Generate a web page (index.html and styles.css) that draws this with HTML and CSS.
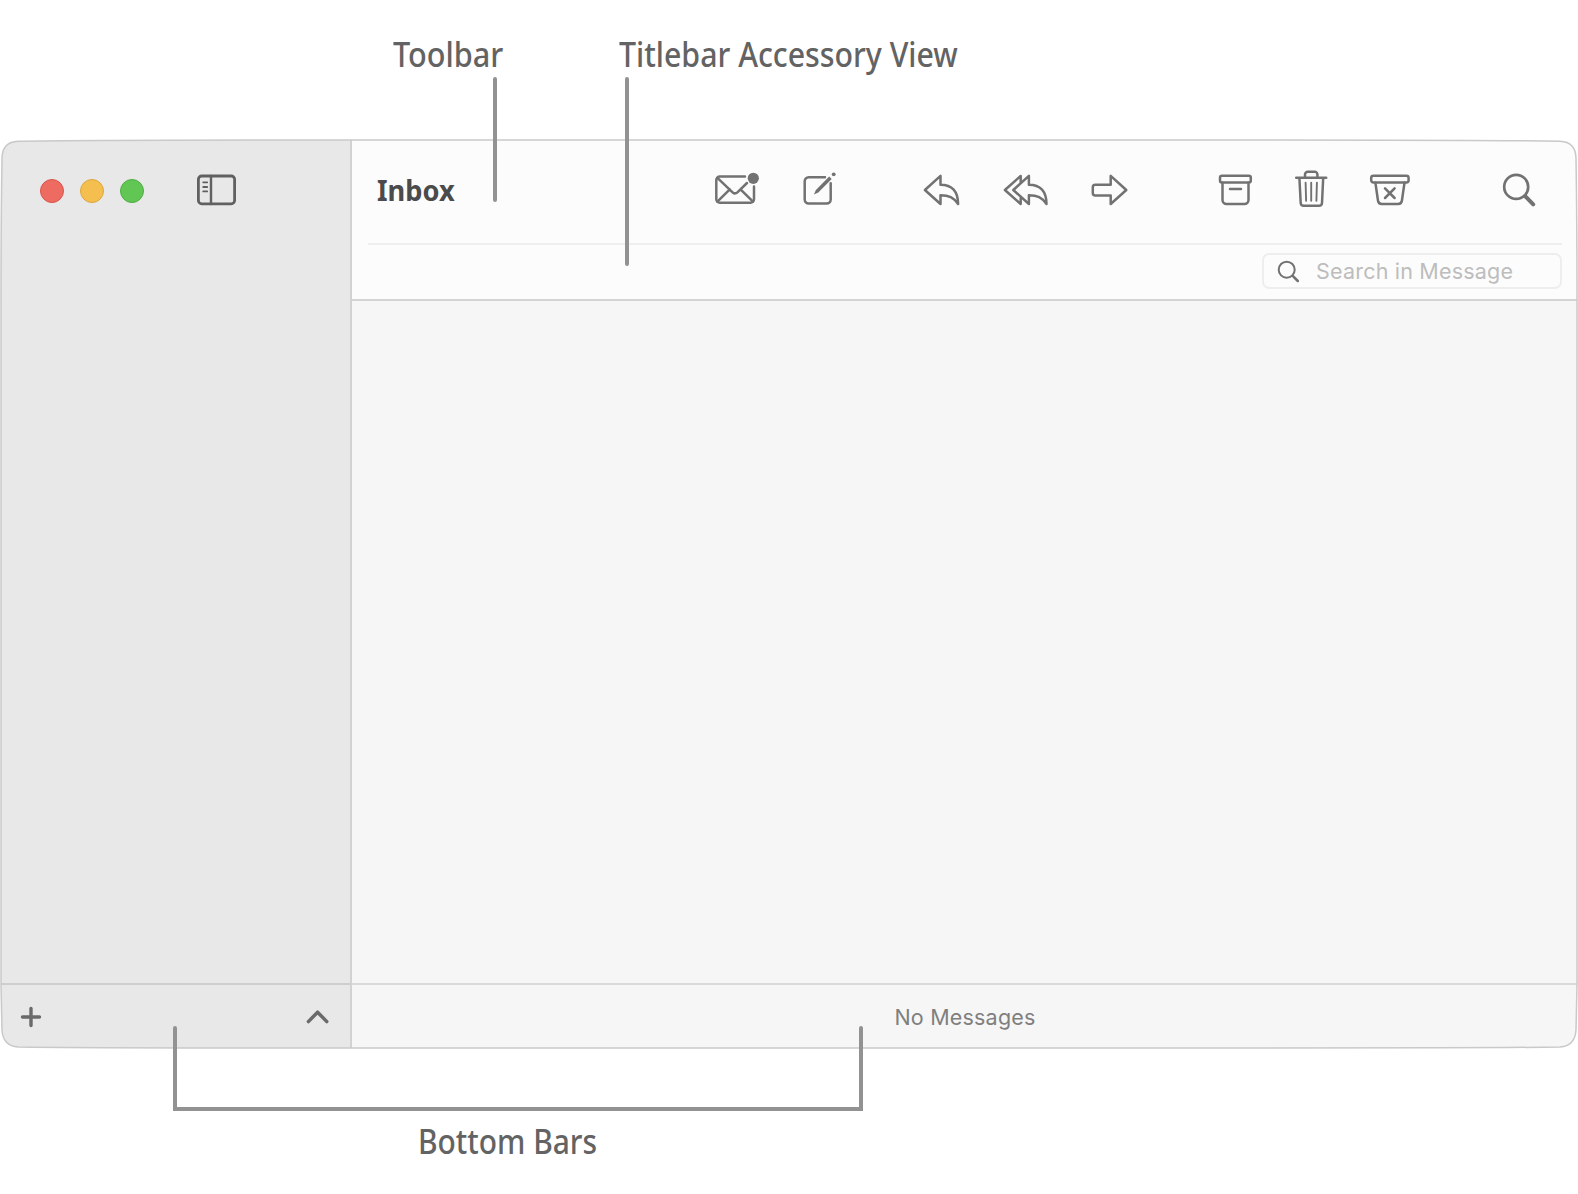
FILE: index.html
```html
<!DOCTYPE html>
<html lang="en">
<head>
<meta charset="utf-8">
<title>Window anatomy</title>
<link rel="stylesheet" href="styles.css">
</head>
<body>
<main class="figure">
  <header class="labels labels-top">
    <span class="label label-toolbar">Toolbar</span>
    <span class="label label-accessory">Titlebar Accessory View</span>
  </header>

  <section class="window">
    <aside class="sidebar">
      <div class="sidebar-top">
        <span class="light close"></span>
        <span class="light minimize"></span>
        <span class="light zoom"></span>
        <svg class="icon toggle" width="44" height="44" viewBox="0 0 44 44"><rect x="4.4" y="8" width="36.2" height="27.8" rx="3.3" stroke-width="2.8"/><path d="M17 8v28" stroke-width="2.4"/><path d="M9.2 14.3h4M9.2 19h4M9.2 23.4h4" stroke-width="1.8"/></svg>
      </div>
      <div class="sidebar-bottom">
        <svg class="icon" width="24" height="24" viewBox="0 0 24 24"><path d="M12 3.5v17M3.5 12h17" stroke-width="3.4"/></svg>
        <svg class="icon" width="26" height="24" viewBox="0 0 26 24"><path d="M3.4 16.6 12.6 7.2l9.2 9.4" stroke-width="3.5"/></svg>
      </div>
    </aside>

    <div class="content">
      <div class="toolbar">
        <h1 class="title">Inbox</h1>
        <div class="group">
          <svg class="icon" width="50" height="44" viewBox="0 0 50 44"><path d="M33 8.6H7.8a3.5 3.5 0 0 0-3.5 3.5v19.1a3.5 3.5 0 0 0 3.5 3.5h30.7a3.5 3.5 0 0 0 3.5-3.5V18.6"/><path d="m5.4 9.8 15.2 14.5q2.4 2.2 4.8 0L35 15M17.8 21.3 5.4 33.6M28.5 21.3 41 33.6"/><circle cx="41.3" cy="10.3" r="5.6" class="solid"/></svg>
          <svg class="icon compose" width="40" height="44" viewBox="0 0 40 44"><path d="M25 9.3H8.7a4 4 0 0 0-4 4v18.2a4 4 0 0 0 4 4h18a4 4 0 0 0 4-4V15.2"/><path d="m13.9 26.4 2-4.5L29.2 8.4l2.5 2.5L18.3 24.4z" class="solid"/><circle cx="33.7" cy="6.3" r="1.9" class="solid"/></svg>
        </div>
        <div class="group">
          <svg class="icon" width="44" height="44" viewBox="0 0 44 44"><path d="M4.9 22 20.5 7.9v8.8C32 16.7 38.1 23.6 38.1 36 33.5 29.4 29 27.3 20.5 27.3v8.7z"/></svg>
          <svg class="icon reply-all" width="50" height="44" viewBox="0 0 50 44"><path d="M13.3 22 28.9 7.9v8.8C40.4 16.7 46.5 23.6 46.5 36 41.9 29.4 37.4 27.3 28.9 27.3v8.7z"/><path d="M20.7 14V7.9L4.9 22l15.8 14v-5.8"/></svg>
          <svg class="icon forward" width="44" height="44" viewBox="0 0 44 44"><path d="M38.3 22 22.7 7.9v8.8H7.3a2.5 2.5 0 0 0-2.5 2.5v5.7a2.5 2.5 0 0 0 2.5 2.5h15.4V36z"/></svg>
        </div>
        <div class="group">
          <svg class="icon" width="42" height="44" viewBox="0 0 42 44"><rect x="6" y="7.7" width="30.8" height="6.8" rx="2"/><path d="M8.5 14.8V32a4 4 0 0 0 4 4h18a4 4 0 0 0 4-4V14.8M16 21h11"/></svg>
          <svg class="icon trash" width="42" height="44" viewBox="0 0 42 44"><path d="M6.2 9.8h30M15 9.5V6.5a2.7 2.7 0 0 1 2.7-2.7h7a2.7 2.7 0 0 1 2.7 2.7v3M9.4 10l1.3 25a3 3 0 0 0 3 2.8H29a3 3 0 0 0 3-2.8L33.2 10"/><path d="m15.6 14.8.5 18M21.2 14.8v18M26.9 14.8l-.5 18" stroke-width="1.9"/></svg>
          <svg class="icon junk" width="48" height="44" viewBox="0 0 48 44"><rect x="5.2" y="7.7" width="37.4" height="6.8" rx="2.2"/><path d="m9.4 14.8 2.6 18A3.8 3.8 0 0 0 15.8 36h16.3a3.8 3.8 0 0 0 3.8-3.2l2.6-18M19 20.3l9.6 9.7M28.6 20.3 19 30"/></svg>
        </div>
        <svg class="icon search" width="42" height="44" viewBox="0 0 42 44"><circle cx="18.2" cy="18.9" r="12" stroke-width="2.7"/><path d="m27.2 28.2 8 8.2" stroke-width="4"/></svg>
      </div>
      <div class="accessory">
        <div class="field">
          <svg class="icon" width="24" height="24" viewBox="0 0 24 24"><circle cx="10.7" cy="9.7" r="8" stroke-width="2"/><path d="m16.7 15.8 5.1 5.2" stroke-width="2.5"/></svg>
          <span class="placeholder">Search in Message</span>
        </div>
      </div>
      <div class="body"></div>
      <div class="status"><span class="status-text">No Messages</span></div>
    </div>
  </section>

  <footer class="labels labels-bottom">
    <span class="label label-bottom">Bottom Bars</span>
  </footer>

  <svg class="overlay" width="1578" height="1194" viewBox="0 0 1578 1194">
    <path class="outline" d="M18 141.3Q80 140 350 140H1228Q1498 140 1560 141.3Q1575.5 142 1576 158Q1577 220 1577 300V985L1576 1030Q1575 1046 1560 1047Q1498 1048 1228 1048H350Q80 1048 18 1047Q3 1046 2 1030L1 985V300Q1 220 2 158Q2.5 142 18 141.3Z"/>
    <path class="callout" d="M495 79V200M627 79V264M175 1028V1109H861V1028"/>
  </svg>
</main>
</body>
</html>
```

FILE: styles.css
```css
* { box-sizing: border-box; }

body {
  margin: 0;
  background: #fff;
  font-family: Inter, "Liberation Sans", sans-serif;
}

.figure {
  position: relative;
  width: 1578px;
  height: 1194px;
  display: flex;
  flex-direction: column;
  overflow: hidden;
}

.labels { display: flex; }
.labels-top { height: 139px; padding: 31px 0 0 393px; }
.labels-bottom { padding: 69px 0 0 418px; }

.label {
  font: 500 33.5px/46px "Noto Sans", "Open Sans", sans-serif;
  color: #636363;
  white-space: nowrap;
  transform-origin: 0 50%;
}
.label-toolbar { width: 226px; transform: scaleX(0.915); }
.label-accessory { transform: scaleX(0.904); }
.label-bottom { transform: scaleX(0.893); }

.window {
  height: 910px;
  display: flex;
  clip-path: path("M18 2Q80 1 350 1H1228Q1498 1 1560 2Q1575.5 3 1576 19Q1577 81 1577 161V846L1576 891Q1575 907 1560 908Q1498 909 1228 909H350Q80 909 18 908Q3 907 2 891L1 846V161Q1 81 2 19Q2.5 3 18 2Z");
}

.sidebar {
  width: 352px;
  display: flex;
  flex-direction: column;
  justify-content: space-between;
  background: #e8e8e8;
  border-right: 2px solid #d2d2d2;
}
.sidebar-top {
  display: flex;
  align-items: center;
  gap: 16px;
  padding: 29px 0 0 40px;
}
.light {
  width: 24px;
  height: 24px;
  margin-top: 2px;
  border-radius: 50%;
  border: 1px solid;
}
.close { background: #ed6b60; border-color: #d9554a; }
.minimize { background: #f5bf4f; border-color: #dba63d; }
.zoom { background: #62c655; border-color: #50ad43; }
.toggle { margin-left: 34px; }
.sidebar-bottom {
  height: 66px;
  display: flex;
  align-items: center;
  justify-content: space-between;
  padding: 0 19px;
  border-top: 2px solid #cecece;
}

.content { flex: 1; display: flex; flex-direction: column; }

.icon {
  display: block;
  flex: none;
  fill: none;
  stroke: #727272;
  stroke-width: 2.5;
  stroke-linecap: round;
  stroke-linejoin: round;
}
.sidebar .icon { stroke: #606060; }
.sidebar-bottom .icon { stroke: #6a6a6a; }
.icon .solid { fill: #727272; stroke: none; }

.toolbar {
  height: 104px;
  display: flex;
  align-items: flex-start;
  padding: 29px 38px 0 24.5px;
  background: #fcfcfc;
}
.title {
  margin: 0 auto 0 0;
  font: 700 28.5px/44px "Noto Sans", "Open Sans", sans-serif;
  color: #4b4b4b;
  transform: scaleX(0.955);
  transform-origin: 0 50%;
}
.group { display: flex; }
.group + .group { margin-left: 80px; }
.compose { margin-left: 38px; }
.reply-all { margin-left: 36px; }
.forward { margin-left: 38px; }
.group:nth-of-type(3) { margin-left: 82px; }
.trash, .junk { margin-left: 34px; }
.search { margin-left: 84px; }

.accessory {
  height: 58px;
  display: flex;
  justify-content: flex-end;
  padding: 10px 16px 0 0;
  background: linear-gradient(#efefef, #efefef) 16px 0 / 1194px 2px no-repeat, #fcfcfc;
  border-bottom: 2px solid #d4d4d4;
}
.field {
  width: 300px;
  height: 36px;
  display: flex;
  align-items: center;
  gap: 16px;
  padding-left: 12px;
  border: 2px solid #eee;
  border-radius: 7px;
}
.field .icon { margin-top: 1px; }
.placeholder {
  font-size: 21.5px;
  line-height: 30px;
  letter-spacing: 0.2px;
  color: #bdbdbd;
  white-space: nowrap;
}

.body { flex: 1; background: #f6f6f6; }
.status {
  height: 66px;
  display: flex;
  align-items: center;
  justify-content: center;
  background: #f6f6f6;
  border-top: 2px solid #dadada;
}
.status-text {
  font-size: 21.5px;
  letter-spacing: 0.2px;
  color: #7f7f7f;
}

/* Window outline and callout leaders drawn over the window */
.overlay { position: absolute; inset: 0; pointer-events: none; }
.outline { fill: none; stroke: #c9c9c9; stroke-width: 1.5; }
.callout {
  fill: none;
  stroke: #929292;
  stroke-width: 4;
  stroke-linecap: round;
}
```
